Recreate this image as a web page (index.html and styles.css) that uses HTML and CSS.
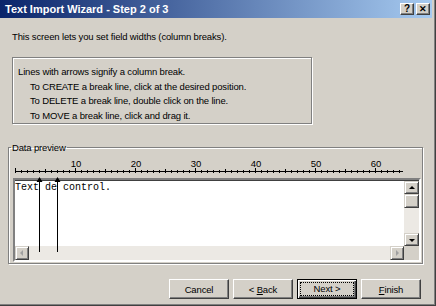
FILE: index.html
```html
<!DOCTYPE html>
<html lang="en">
<head>
  <meta charset="UTF-8">
  <title>Text Import Wizard - Step 2 of 3</title>
  <link rel="stylesheet" href="styles.css">
</head>
<body>
  <div class="window">
    <div class="titlebar">
      <span class="title">Text Import Wizard - Step 2 of 3</span>
      <div class="caption-btns">
        <span class="cap-btn">?</span>
        <span class="cap-btn close">&#x2715;</span>
      </div>
    </div>

    <p class="intro">This screen lets you set field widths (column breaks).</p>

    <div class="hint">
      <div>Lines with arrows signify a column break.</div>
      <div class="indent">To CREATE a break line, click at the desired position.</div>
      <div class="indent">To DELETE a break line, double click on the line.</div>
      <div class="indent">To MOVE a break line, click and drag it.</div>
    </div>

    <fieldset class="group">
      <legend>Data preview</legend>
      <div class="preview-wrap">
        <svg class="ruler" width="408" height="19" viewBox="0 0 408 19">
          <g fill="#000" font-family="Liberation Sans, Arial, sans-serif" font-size="9.5" text-anchor="middle">
            <text x="63" y="8">10</text>
            <text x="123" y="8">20</text>
            <text x="183" y="8">30</text>
            <text x="243" y="8">40</text>
            <text x="303" y="8">50</text>
            <text x="363" y="8">60</text>
          </g>
          <path id="ticks" stroke="#000" stroke-width="1" fill="none" d=""/>
        </svg>
        <div class="preview">
          <div class="data">Text de control.</div>
          <div class="vscroll">
            <span class="sb-btn up"></span>
            <span class="thumb"></span>
            <span class="track"></span>
            <span class="sb-btn down"></span>
          </div>
          <div class="hscroll">
            <span class="sb-btn left"></span>
            <span class="track"></span>
            <span class="sb-btn right"></span>
          </div>
          <div class="corner"></div>
        </div>
        <svg class="breaks" width="60" height="95" viewBox="0 0 60 95">
          <path d="M26.5 21 V93 M44.5 21 V93" stroke="#000" stroke-width="1"/>
          <path d="M26.5 18 L23.5 23 L29.5 23 Z M44.5 18 L41.5 23 L47.5 23 Z" fill="#000"/>
        </svg>
      </div>
    </fieldset>

    <div class="buttons">
      <button class="btn">Cancel</button>
      <button class="btn">&lt; <u>B</u>ack</button>
      <button class="btn default"><span class="focus">Next &gt;</span></button>
      <button class="btn"><u>F</u>inish</button>
    </div>
  </div>

  <script>
    // ruler ticks: one per character column, 6px wide
    let d = 'M2 12.5 H390';
    for (let i = 0; i <= 64; i++) {
      const x = 2 + i * 6 + 0.5;
      const top = i % 10 === 0 ? 9 : (i % 5 === 0 ? 10 : 11);
      d += ` M${x} ${top} V14`;
    }
    document.getElementById('ticks').setAttribute('d', d);
  </script>
</body>
</html>
```

FILE: styles.css
```css
body { margin: 0; font-family: "Liberation Sans", Arial, sans-serif; font-size: 9.5px; letter-spacing: -0.15px; color: #000; }
.window { width: 436px; height: 306px; box-sizing: border-box; background: #d4d0c8; border-right: 1px solid #404040; border-bottom: 1px solid #404040; box-shadow: inset -1px -1px #808080; overflow: hidden; }

.titlebar { height: 18px; margin-right: 3px; padding-left: 5px; display: flex; align-items: center; justify-content: space-between; background: linear-gradient(to right, #0a246a, #a6caf0); color: #fff; font-weight: bold; font-size: 11px; letter-spacing: 0; }
.caption-btns { display: flex; gap: 2px; padding-right: 2px; }
.cap-btn { width: 14px; height: 12px; box-sizing: border-box; background: #d4d0c8; color: #000; border: 1px solid; border-color: #fff #404040 #404040 #fff; box-shadow: inset -1px -1px #808080; font-size: 10px; line-height: 10px; text-align: center; font-weight: bold; }
.cap-btn.close { font-size: 9px; }

.intro { margin: 12px 0 0 12px; line-height: 13px; }

.hint { margin: 14px 0 0 12px; width: 300px; height: 67px; box-sizing: border-box; border: 1px solid #808080; box-shadow: inset 1px 1px #fff, 1px 1px #fff; padding: 7px 0 0 5px; line-height: 14.5px; }
.hint .indent { padding-left: 12px; }

.group { margin: 18px 0 0 8px; width: 415px; height: 122px; box-sizing: border-box; padding: 0; border: 1px solid #808080; box-shadow: inset 1px 1px #fff, 1px 1px #fff; }
.group legend { padding: 0 1px; margin-left: 2px; line-height: 11px; }
.preview-wrap { position: relative; margin-left: 4px; }
.ruler { display: block; margin-top: 6px; }

.preview { width: 408px; height: 84px; box-sizing: border-box; border: 2px solid; border-color: #808080 #fff #fff #808080; box-shadow: inset 1px 1px #404040; display: grid; grid-template-columns: 389px 15px; grid-template-rows: 66px 14px; }
.data { background: #fff; font-family: "Liberation Mono", "Courier New", monospace; font-size: 10px; letter-spacing: 0; line-height: 12px; padding: 1px 0 0 0; margin: 1px 0 0 0; }
.vscroll { display: flex; flex-direction: column; background: #ece9e4; margin-top: 1px; }
.hscroll { display: flex; background: #ece9e4; }
.corner { background: #d4d0c8; }
.track { flex: 1; }
.sb-btn, .thumb { display: block; background: #d4d0c8; box-sizing: border-box; border: 1px solid; border-color: #d4d0c8 #404040 #404040 #d4d0c8; box-shadow: inset 1px 1px #fff, inset -1px -1px #808080; position: relative; }
.vscroll .sb-btn { height: 13px; }
.vscroll .thumb { height: 14px; }
.hscroll .sb-btn { width: 14px; }
.sb-btn::after { content: ""; position: absolute; left: 50%; top: 50%; width: 0; height: 0; border: 3px solid transparent; }
.sb-btn.up::after { border-bottom-color: #000; border-top-width: 0; margin: -2px 0 0 -3px; }
.sb-btn.down::after { border-top-color: #000; border-bottom-width: 0; margin: -1px 0 0 -3px; }
.sb-btn.left::after { border-right-color: #a0a0a0; border-left-width: 0; margin: -3px 0 0 -2px; }
.sb-btn.right::after { border-left-color: #a0a0a0; border-right-width: 0; margin: -3px 0 0 -1px; }

.breaks { position: absolute; left: 0; top: 0; }

.buttons { display: flex; justify-content: flex-end; gap: 4px; margin: 15px 14px 0 0; }
.btn { width: 60px; height: 20px; box-sizing: border-box; background: #d4d0c8; font-family: inherit; font-size: 9.5px; letter-spacing: -0.15px; color: #000; border: 1px solid; border-color: #fff #404040 #404040 #fff; box-shadow: inset -1px -1px #808080; padding: 0; }
.btn.default { border: 1px solid #000; box-shadow: inset 1px 1px #fff, inset -1px -1px #404040, inset -2px -2px #808080; padding: 3px; }
.btn .focus { display: block; height: 100%; box-sizing: border-box; outline: 1px dotted #000; line-height: 12px; }
```
